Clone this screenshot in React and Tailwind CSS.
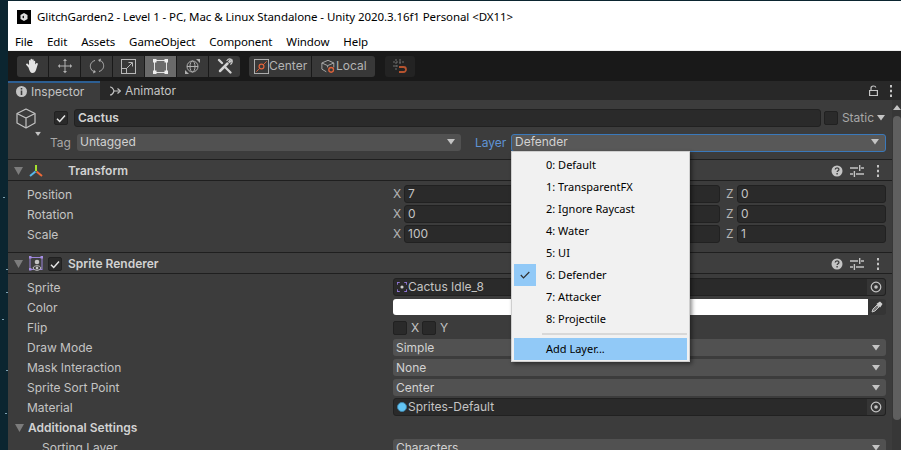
const MENU = ["File", "Edit", "Assets", "GameObject", "Component", "Window", "Help"];
const LAYERS = ["0: Default", "1: TransparentFX", "2: Ignore Raycast", "4: Water", "5: UI", "6: Defender", "7: Attacker", "8: Projectile"];
const STARS = ["left-[3px] top-[197px]", "left-[6px] top-[292px]", "left-[6px] top-[269px]", "left-[2px] top-[319px]", "left-[6px] top-[370px]", "left-[5px] top-[413px]"];
const CHECKED_LAYER = 5;

// --- small drawings ---
const Tri = ({ className = "" }) => (
  <svg width="10" height="6" viewBox="0 0 10 6" className={className}>
    <path d="M1 0h8L5 5.500z" fill="currentColor" />
  </svg>
);

const FoldTri = ({ className = "" }) => (
  <svg width="9" height="8" viewBox="0 0 9 8" className={className}>
    <path d="M0 0h9L4.500 8z" fill="#7c7c7c" />
  </svg>
);

const Dots = () => (
  <svg width="4" height="12" viewBox="0 0 4 12" className="text-[#c4c4c4]">
    <path d="M1 0h2v2.500H1zM1 4.750h2v2.500H1zM1 9.500h2V12H1z" fill="currentColor" />
  </svg>
);

const Check = () => (
  <svg width="10" height="9" viewBox="0 0 10 9">
    <path d="M1 4.800 3.700 7.500 9 1.500" fill="none" stroke="#e6e6e6" strokeWidth="1.500" />
  </svg>
);

const CheckBox = ({ on }) => (
  <span className="flex h-[14px] w-[14px] shrink-0 items-center justify-center rounded-[2px] border border-[#212121] bg-[#2a2a2a]">
    {on && <Check />}
  </span>
);

const Target = () => (
  <svg width="12" height="12" viewBox="0 0 12 12">
    <circle cx="6" cy="6" r="4.800" fill="none" stroke="#c4c4c4" strokeWidth="1.200" />
    <circle cx="6" cy="6" r="1.800" fill="#c4c4c4" />
  </svg>
);

const Help = () => (
  <svg width="12" height="12" viewBox="0 0 12 12">
    <circle cx="6" cy="6" r="5.500" fill="#c4c4c4" />
    <path d="M4.200 4.600c0-2.300 3.700-2.300 3.700-.2 0 1.300-1.800 1.300-1.800 2.700" fill="none" stroke="#3e3e3e" strokeWidth="1.300" />
    <rect x="5.400" y="8" width="1.400" height="1.500" fill="#3e3e3e" />
  </svg>
);

const Sliders = () => (
  <svg width="14" height="12" viewBox="0 0 14 12">
    <path d="M0 3h8M11 3h3M0 9h3M6 9h8" stroke="#c4c4c4" strokeWidth="1.300" />
    <path d="M9 0h1.400v6H9zM3.700 6h1.400v6H3.700z" fill="#c4c4c4" />
  </svg>
);

const HeaderTools = () => (
  <div className="ml-auto mr-[5px] flex items-center">
    <Help />
    <span className="ml-[7px]"><Sliders /></span>
    <span className="ml-[12px] mr-[3px]"><Dots /></span>
  </div>
);

// --- toolbar icons ---
const Hand = () => (
  <svg width="16" height="16" viewBox="0 0 16 16">
    <path d="M3.500 9.500 1.300 7c-.8-1 .5-2 1.400-1.200L4 7V2.800c0-1.100 1.500-1.100 1.500 0V6.500V1.500c0-1.100 1.600-1.100 1.600 0v5V2c0-1.100 1.600-1.100 1.600 0v5V3.500c0-1.100 1.500-1.100 1.500 0v2.900l1.100-1.200c.9-.8 2 .2 1.400 1.200L11 12c-.7 1.700-1.700 3-3.500 3-2.100 0-3-2-4-5.500z" fill="#e2e2e2" />
  </svg>
);

const Move = () => (
  <svg width="16" height="16" viewBox="0 0 16 16" fill="none" stroke="#b0b0b0" strokeWidth="1">
    <path d="M8 3v10M3 8h10" />
    <path d="M6 3 8 .800 10 3zM6 13l2 2.200 2-2.200zM3 6 .800 8 3 10zM13 6l2.200 2-2.200 2z" fill="#b0b0b0" stroke="none" />
  </svg>
);

const Rotate = () => (
  <svg width="16" height="16" viewBox="0 0 16 16" fill="none" stroke="#b0b0b0" strokeWidth="1">
    <path d="M6 2.500C2.500 3.500 .800 6.500 1.500 9.500c.4 1.900 1.600 3.300 3 4" />
    <path d="M10 13.500c3.500-1 5.200-4 4.500-7-.4-1.900-1.600-3.300-3-4" />
    <path d="M4 15.500 4.800 11.700 7 14zM12 .500 11.200 4.300 9 2z" fill="#b0b0b0" stroke="none" />
  </svg>
);

const Scale = () => (
  <svg width="15" height="15" viewBox="0 0 15 15" fill="none" stroke="#b8b8b8" strokeWidth="1">
    <rect x=".500" y=".500" width="14" height="14" />
    <rect x=".500" y="9.500" width="5" height="5" />
    <path d="M6 9 11 4M7.500 3.500H11.500V7.500" />
  </svg>
);

const RectTool = () => (
  <svg width="15" height="15" viewBox="0 0 15 15">
    <rect x="1.500" y="1.500" width="12" height="12" fill="none" stroke="#e4e4e4" strokeWidth="1" />
    <path d="M0 0h3.500v3.500H0zM11.500 0H15v3.500h-3.500zM0 11.500h3.500V15H0zM11.500 11.500H15V15h-3.500z" fill="#efefef" />
  </svg>
);

const Transform = () => (
  <svg width="17" height="17" viewBox="0 0 17 17" fill="none" stroke="#b0b0b0" strokeWidth="1">
    <circle cx="8.500" cy="8.500" r="5.500" />
    <ellipse cx="8.500" cy="8.500" rx="2.500" ry="5.500" />
    <path d="M3 8.500h11" />
    <path d="M12 1h4v4zM1 12v4h4z" fill="#b0b0b0" stroke="none" />
  </svg>
);

const Tools = () => (
  <svg width="16" height="16" viewBox="0 0 16 16" fill="none" stroke="#d2d2d2" strokeLinecap="round">
    <path d="M3 13 10.500 5.500" strokeWidth="2.500" />
    <path d="M10 2.500c1-1.300 2.500-1.800 4-1.300l-2.200 2.200 1 1L15 2.200c.5 1.500 0 3-1.300 4" strokeWidth="1.200" />
    <path d="M2 2l3 3M8 9l5.500 5.500" strokeWidth="2.300" />
  </svg>
);

const PivotCenter = () => (
  <svg width="15" height="15" viewBox="0 0 16 16" fill="none">
    <rect x=".500" y=".500" width="15" height="15" stroke="#b4b4b4" />
    <path d="M2.500 13.500 6 10M10 6l3.500-3.500" stroke="#e0623a" />
    <circle cx="8" cy="8" r="2.600" stroke="#e0623a" strokeWidth="1.300" />
  </svg>
);

const PivotLocal = () => (
  <svg width="15" height="15" viewBox="0 0 17 16" fill="none">
    <path d="M1 4 8 1l6.500 3v5M1 4v7l5 3M1 4l6.500 3v2M7.500 7l7-3" stroke="#b4b4b4" />
    <circle cx="11.500" cy="11.800" r="2.700" stroke="#e0623a" strokeWidth="1.500" />
  </svg>
);

const Snap = () => (
  <svg width="14" height="15" viewBox="0 0 14 15" fill="none">
    <path d="M3 0v11M7 0v5M0 3h11M0 7h5" stroke="#6e6e6e" strokeDasharray="2 1" />
    <path d="M6 8h4.500a2.500 2.500 0 0 1 0 5H6" stroke="#b5532f" strokeWidth="1.800" />
  </svg>
);

const Cube = () => (
  <svg width="20" height="21" viewBox="0 0 20 21" fill="none" stroke="#c4c4c4" strokeWidth="1.200" strokeLinejoin="round">
    <path d="M10 1 19 5.500V15L10 20 1 15V5.500z" />
    <path d="M1 5.500 10 10l9-4.500M10 10v10" />
  </svg>
);

const TransformGlyph = () => (
  <svg width="14" height="12" viewBox="0 0 14 12" fill="none" strokeWidth="2">
    <path d="M7 0v6" stroke="#a6e22e" />
    <path d="M6.500 6.500 1 11" stroke="#58b7ea" />
    <path d="M7.500 6.500 13 11" stroke="#ef6a38" />
  </svg>
);

const SpriteGlyph = () => (
  <svg width="14" height="16" viewBox="0 0 14 16" fill="none">
    <rect x="1" y="1.500" width="12" height="12" stroke="#9a83d8" />
    <path d="M0 0h2.500v2.500H0zM11.500 0H14v2.500h-2.500zM0 12h2.500v2.500H0z" fill="#a58ee2" />
    <circle cx="8" cy="6" r="2.300" fill="#c4c4c4" />
    <path d="M4 12c1-3 7-3 8 0-1.500 3-6.500 3-8 0z" fill="#3e3e3e" stroke="#c4c4c4" />
    <circle cx="8" cy="12" r="1.300" fill="#c4c4c4" />
  </svg>
);

const SpriteThumb = () => (
  <svg width="10" height="10" viewBox="0 0 11 11">
    <path d="M0 0h3v1H1v2H0zM8 0h3v3h-1V1H8zM0 8h1v2h2v1H0zM10 8h1v3H8v-1h2z" fill="#8f75d6" />
    <circle cx="5.500" cy="5.500" r="1.700" fill="#d0d0d0" />
  </svg>
);

const Eyedropper = () => (
  <svg width="12" height="12" viewBox="0 0 12 12" fill="none">
    <path d="M1 11 2 8l4-4 2 2-4 4z" stroke="#c4c4c4" fill="#777" />
    <path d="M6 2.500 9 .500l2.500 2.500L9.500 6 9 6.500 5.500 3z" fill="#d0d0d0" />
  </svg>
);

// --- inspector parts ---
const Row = ({ label, indent, children }) => (
  <div className="flex h-[20px] items-center pl-[19px] pr-[6px]">
    <span className={`w-[366px] shrink-0 truncate ${indent ? "pl-[15px]" : ""}`}>{label}</span>
    <div className="min-w-0 flex-1">{children}</div>
  </div>
);

const Dropdown = ({ value, className = "", focus }) => (
  <div className={`flex items-center justify-between rounded-[3px] pl-[3px] pr-[5px] ${focus ? "h-[18px] border border-[#3a79bb] bg-[#585858]" : "h-[17px] bg-[#515151]"} ${className}`}>
    <span className="text-[#d2d2d2]">{value}</span>
    <Tri className="text-[#c4c4c4]" />
  </div>
);

const ObjectField = ({ icon, value }) => (
  <div className="mb-[2px] flex h-[18px] items-center rounded-[3px] border border-[#212121] bg-[#2a2a2a] pl-[2px]">
    <span className="flex w-[12px] justify-center">{icon}</span>
    <span>{value}</span>
    <span className="ml-auto flex h-full w-[18px] items-center justify-center rounded-r-[3px] bg-[#353535]"><Target /></span>
  </div>
);

const Axis = ({ name, value }) => (
  <div className="mb-[2px] flex items-center">
    <span className="w-[11px] shrink-0 text-[#b4b4b4]">{name}</span>
    <span className="h-[18px] flex-1 rounded-[3px] border border-[#212121] bg-[#2a2a2a] pl-[3px] leading-[16px]">{value}</span>
  </div>
);

const Vector = ({ label, x, z }) => (
  <Row label={label}>
    <div className="grid grid-cols-3 gap-[6.500px]">
      <Axis name="X" value={x} />
      <Axis />
      <Axis name="Z" value={z} />
    </div>
  </Row>
);

const ComponentHeader = ({ children }) => (
  <div className="flex h-[22px] items-center border-y border-y-[#1f1f1f] bg-[#3e3e3e] pl-[6px] pr-[4px] pt-[2px] font-semibold text-[#d2d2d2]">
    <FoldTri className="mr-[6px]" />
    {children}
    <HeaderTools />
  </div>
);

const ToolButton = ({ children, active, className = "" }) => (
  <div className={`flex h-[21px] w-[31px] items-center justify-center ${active ? "bg-[#6a6a6a]" : "bg-[#383838]"} ${className}`}>
    {children}
  </div>
);

export default function App() {
  return (
    <div className="relative h-[450px] w-[901px] overflow-hidden bg-[#0b2530] pl-2 pt-px font-['Inter',sans-serif] text-[12px] text-[#c4c4c4]">
      {/* stars of the desktop wallpaper */}
      {STARS.map((s) => <span key={s} className={`absolute h-px w-[2px] bg-[#7fa3b5] ${s}`} />)}

      {/* title bar + menu */}
      <div className="bg-white font-['Noto_Sans',sans-serif] text-[11.500px] text-black">
        <div className="flex h-[32px] items-center pl-[9px]">
          <span className="mr-[6px] flex h-[14px] w-[14px] items-center justify-center bg-black">
            <svg width="8" height="8" viewBox="0 0 8 8"><path d="M4 0 7.500 2v4L4 8 .500 6V2z" fill="#ddd" /><path d="M4 2.500 2 4l2 1.500z" fill="#111" /></svg>
          </span>
          <span className="tracking-[-0.08px]">GlitchGarden2 - Level 1 - PC, Mac &amp; Linux Standalone - Unity 2020.3.16f1 Personal &lt;DX11&gt;</span>
        </div>
        <div className="flex h-[17px] items-center gap-[14px] pl-[7px] tracking-[-0.1px]">
          {MENU.map((m) => <span key={m}>{m}</span>)}
        </div>
        <div className="h-px bg-[#f0f0f0]" />
      </div>

      {/* toolbar */}
      <div className="flex h-[30px] items-center bg-[#191919] pl-[9px]">
        <div className="flex gap-px">
          <ToolButton className="rounded-l-[3px]"><Hand /></ToolButton>
          <ToolButton><Move /></ToolButton>
          <ToolButton><Rotate /></ToolButton>
          <ToolButton><Scale /></ToolButton>
          <ToolButton active><RectTool /></ToolButton>
          <ToolButton><Transform /></ToolButton>
          <ToolButton className="rounded-r-[3px]"><Tools /></ToolButton>
        </div>
        <div className="ml-[9px] flex gap-px text-[#b4b4b4]">
          <div className="flex h-[21px] w-[62px] items-center rounded-l-[3px] bg-[#383838] pl-[5px]"><PivotCenter />Center</div>
          <div className="flex h-[21px] w-[63px] items-center rounded-r-[3px] bg-[#383838] pl-[9px]"><PivotLocal />Local</div>
        </div>
        <div className="ml-[10px] flex h-[21px] w-[30px] items-center justify-center rounded-[3px] bg-[#232323]"><Snap /></div>
      </div>

      {/* tabs */}
      <div className="flex h-[19px] items-stretch bg-[#282828]">
        <div className="flex w-[92px] items-center gap-[4px] border-t-2 border-t-[#2d5f93] bg-[#3c3c3c] pl-[8px]">
          <svg width="11" height="11" viewBox="0 0 11 11">
            <circle cx="5.500" cy="5.500" r="5.500" fill="#c4c4c4" />
            <path d="M4.700 2h1.600v1.600H4.700zM4.700 4.500h1.600V9H4.700z" fill="#3c3c3c" />
          </svg>
          <span>Inspector</span>
        </div>
        <div className="flex items-center gap-[4px] pl-[10px]">
          <svg width="11" height="10" viewBox="0 0 11 10" fill="none" stroke="#c4c4c4" strokeWidth="1.200">
            <path d="M0 1c2 0 3 1 4 4-1 3-2 4-4 4M4 5h6" />
            <path d="M7.500 2.500 10.500 5l-3 2.500" />
          </svg>
          <span>Animator</span>
        </div>
        <div className="ml-auto flex items-center gap-[11px] pr-[8px]">
          <svg width="9" height="11" viewBox="0 0 9 11" fill="none" stroke="#c4c4c4" strokeWidth="1.200">
            <path d="M.600 5.500h7.800v5H.600zM2 5.500V3c0-2.600 4.500-2.600 4.800-.5" />
          </svg>
          <Dots />
        </div>
      </div>

      {/* inspector */}
      <div className="flex h-[400px] bg-[#3c3c3c]">
        <div className="min-w-0 flex-1">
          {/* game object header */}
          <div className="h-[59px] pt-[9px]">
            <div className="flex h-[18px] items-center pl-[8px] pr-[6px]">
              <span className="relative w-[30px]">
                <Cube />
                <Tri className="absolute -bottom-[8px] left-[17px] scale-75 text-[#c4c4c4]" />
              </span>
              <span className="ml-[8px]"><CheckBox on /></span>
              <div className="ml-[6px] h-[18px] flex-1 rounded-[3px] border border-[#212121] bg-[#2a2a2a] pl-[3px] font-semibold leading-[16px] text-[#d2d2d2]">Cactus</div>
              <span className="ml-[3px]"><CheckBox /></span>
              <span className="ml-[4px] text-[#a8a8a8]">Static</span>
              <Tri className="ml-[2px] text-[#c4c4c4]" />
            </div>
            <div className="mt-[7px] flex h-[17px] items-center pl-[42px] pr-[6px]">
              <span className="w-[27px] text-[#a8a8a8]">Tag</span>
              <Dropdown value="Untagged" className="w-[384px] pb-px" />
              <span className="ml-[14px] w-[36px] text-[#5f93d6]">Layer</span>
              <Dropdown value="Defender" className="flex-1 pb-px" focus />
            </div>
          </div>

          <ComponentHeader>
            <span className="flex w-[14px] justify-center"><TransformGlyph /></span>
            <span className="ml-[25px]">Transform</span>
          </ComponentHeader>
          <div className="h-[71px] pt-[4px]">
            <Vector label="Position" x="7" z="0" />
            <Vector label="Rotation" x="0" z="0" />
            <Vector label="Scale" x="100" z="1" />
          </div>

          <ComponentHeader>
            <span className="flex w-[14px] justify-center"><SpriteGlyph /></span>
            <span className="ml-[5px]"><CheckBox on /></span>
            <span className="ml-[6px]">Sprite Renderer</span>
          </ComponentHeader>
          <div className="pt-[4px]">
            <Row label="Sprite"><ObjectField icon={<SpriteThumb />} value="Cactus Idle_8" /></Row>
            <Row label="Color">
              <div className="mb-[2px] flex h-[16px] items-stretch overflow-hidden rounded-[3px]">
                <div className="flex-1 bg-white" />
                <span className="flex w-[18px] items-center justify-center bg-[#353535]"><Eyedropper /></span>
              </div>
            </Row>
            <Row label="Flip">
              <div className="flex items-center">
                <CheckBox /><span className="ml-[4px] w-[11px]">X</span>
                <CheckBox /><span className="ml-[4px]">Y</span>
              </div>
            </Row>
            <Row label="Draw Mode"><Dropdown value="Simple" className="mb-px" /></Row>
            <Row label="Mask Interaction"><Dropdown value="None" className="mb-px" /></Row>
            <Row label="Sprite Sort Point"><Dropdown value="Center" className="mb-px" /></Row>
            <Row label="Material">
              <ObjectField
                icon={<span className="h-[10px] w-[10px] rounded-full border border-[#3f83a8] bg-[#63c5f5]" />}
                value="Sprites-Default"
              />
            </Row>
            <div className="flex h-[20px] items-center pl-[7px] font-semibold text-[#d2d2d2]">
              <FoldTri className="mr-[4px]" />Additional Settings
            </div>
            <Row label="Sorting Layer" indent><Dropdown value="Characters" className="mb-px" /></Row>
          </div>
        </div>

        {/* scrollbar */}
        <div className="flex w-[9px] shrink-0 flex-col items-center bg-[#373737]">
          <svg width="8" height="5" viewBox="0 0 8 5" className="mt-[5px]"><path d="M0 5 4 0l4 5z" fill="#c4c4c4" /></svg>
          <div className="ml-px mt-[6px] h-[304px] w-[8px] rounded-[4px] bg-[#5f5f5f]" />
        </div>
      </div>

      {/* layer popup */}
      <div className="absolute left-[511px] top-[151px] h-[211px] w-[179px] border border-[#cfcfcf] bg-[#f1f1f1] p-[2px] font-['Noto_Sans',sans-serif] text-[11px] text-black shadow-[2px_2px_4px_rgba(0,0,0,0.45)]">
        {LAYERS.map((l, i) => (
          <div key={l} className="flex h-[22px] items-center">
            <span className={`flex h-[22px] w-[22px] items-center justify-center ${i === CHECKED_LAYER ? "bg-[#91c9f7]" : ""}`}>
              {i === CHECKED_LAYER && (
                <svg width="10" height="8" viewBox="0 0 10 8"><path d="M.800 4 3.500 6.800 9.300 1" fill="none" stroke="#303030" strokeWidth="1.200" /></svg>
              )}
            </span>
            <span className="ml-[10px]">{l}</span>
          </div>
        ))}
        <div className="ml-[28px] mt-[3px] h-[2px] bg-[#d8d8d8]" />
        <div className="mt-[3px] flex h-[22px] items-center bg-[#91c9f7] pl-[32px]">Add Layer...</div>
      </div>
    </div>
  );
}
